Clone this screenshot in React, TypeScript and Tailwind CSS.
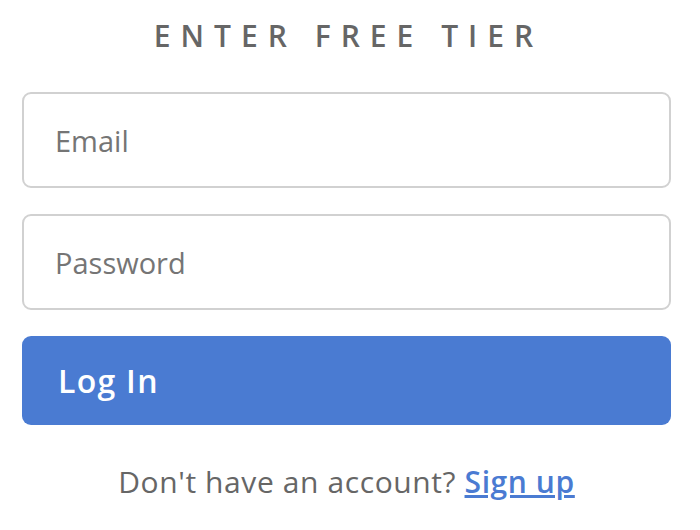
export default function App() {
  return (
    <div className="w-[700px] h-[530px] bg-white pl-[22px] pr-[29px] pt-[14px] font-['Open_Sans',sans-serif]">
      {/* Title */}
      <h1 className="pl-[4px] text-center text-[30px] font-semibold tracking-[10px] text-[#666666] leading-[44px]">
        ENTER FREE TIER
      </h1>

      <div className="mt-[34px] flex flex-col gap-[26px]">
        <input
          type="email"
          placeholder="Email"
          className="h-[96px] w-full rounded-[9px] border-2 border-[#d1d1d1] px-[31px] text-[29px] text-[#333] placeholder:text-[#757575] outline-none"
        />
        <input
          type="password"
          placeholder="Password"
          className="h-[96px] w-full rounded-[9px] border-2 border-[#d1d1d1] px-[31px] text-[29px] text-[#333] placeholder:text-[#757575] outline-none"
        />
        <button className="h-[89px] w-full rounded-[9px] bg-[#4a7bd2] px-[36px] text-left text-[32px] font-semibold tracking-[0.04em] text-white">
          Log In
        </button>
      </div>

      {/* Sign up */}
      <p className="mt-[34px] text-center text-[30px] tracking-[0.02em] text-[#666666]">
        Don't have an account?{" "}
        <a href="#" className="font-semibold text-[#4a7bd2] underline">
          Sign up
        </a>
      </p>
    </div>
  )
}
